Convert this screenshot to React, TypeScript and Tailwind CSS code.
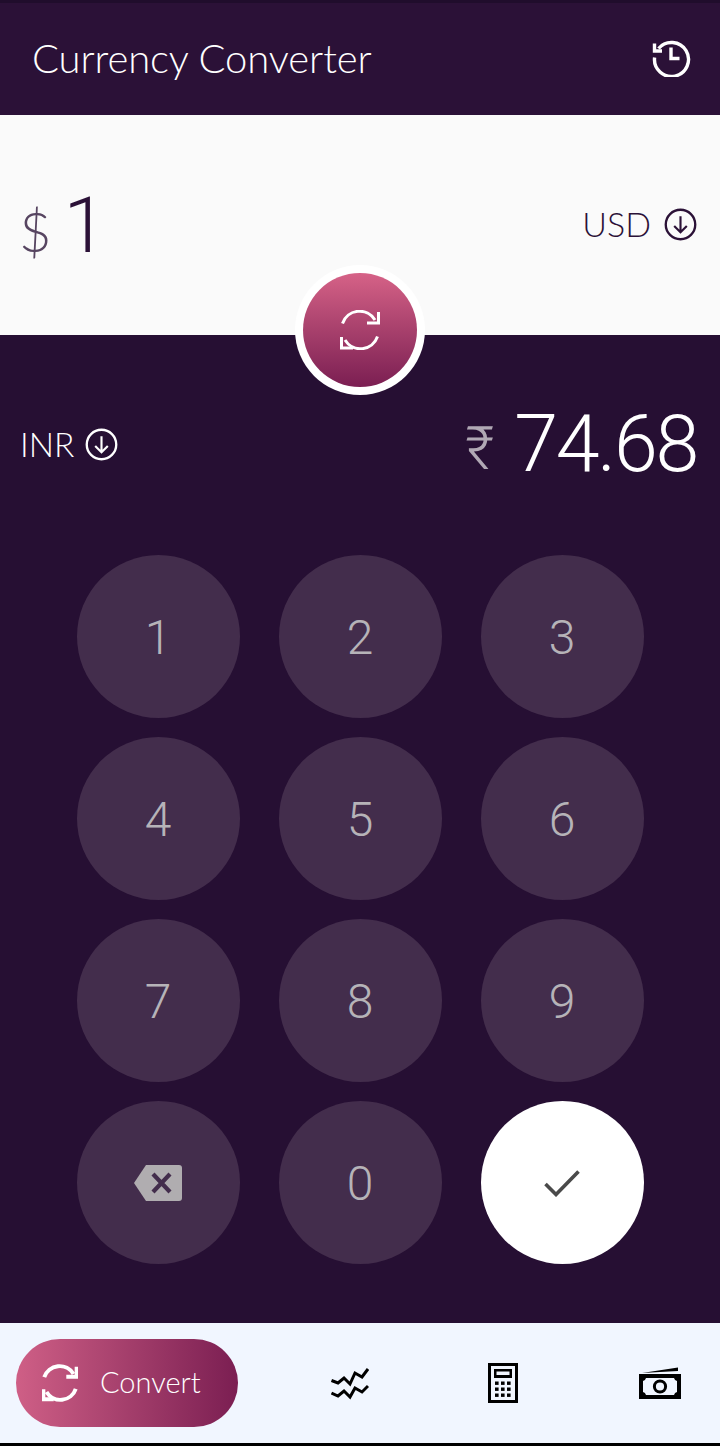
const font = { fontFamily: '"Lato", "Noto Sans", sans-serif' };
const digits = { fontFamily: '"Roboto", "Noto Sans", sans-serif' };

function DownCircle({ className }: { className: string }) {
  return (
    <svg viewBox="0 0 34 34" className={className} fill="none" stroke="currentColor" strokeWidth="2.4">
      <circle cx="17" cy="17" r="15.2" />
      <path d="M17 8.5V25M10.5 18.5 17 25l6.5-6.5" strokeWidth="2.2" />
    </svg>
  );
}

function Sync({ className, width }: { className: string; width: number }) {
  return (
    <svg viewBox="0 0 40 40" className={className} fill="none" stroke="currentColor" strokeWidth={width}>
      <path d="M2.5 13.5A18 18 0 0 1 35 10" />
      <path d="M38.5 2V13H27" />
      <path d="M37.5 26.5A18 18 0 0 1 5 30" />
      <path d="M1.5 27V38H13" />
    </svg>
  );
}

function Key({ label }: { label: string }) {
  return (
    <div style={digits} className="w-[163px] h-[163px] rounded-full bg-[#432d4c] flex items-center justify-center pt-[2px] text-[48px] font-light leading-none text-[#b6b3b8]">
      {label}
    </div>
  );
}

export default function App() {
  return (
    <div style={font} className="w-[720px] h-[1446px] flex flex-col bg-black overflow-hidden relative">
      <div className="h-[3px] bg-[#200d2c]" />
      <header className="h-[112px] bg-[#2b1137] flex items-center justify-between pl-[32px] pr-[29px] text-white">
        <h1 className="text-[40px] font-light leading-none tracking-[-0.1px] -mt-[2px]">Currency Converter</h1>
        <svg viewBox="0 0 40 40" className="w-[40px] h-[40px] -mt-[4px]" fill="none" stroke="white" strokeWidth="3.4">
          <path d="M7.5 11.5A17 17 0 1 1 3.6 20.5" />
          <path d="M3.5 6.5V14H11" strokeWidth="3.4" />
          <path d="M20 10.5V21.5H28.5" />
        </svg>
      </header>

      <section className="h-[220px] bg-[#fafafa] flex items-start justify-between pl-[19px] pr-[23px] pt-[70px] text-[#2b1137]">
        <div className="flex items-start">
          <span className="text-[56px] font-light leading-none mt-[18px] text-[#574561]">$</span>
          <span style={digits} className="text-[78px] font-light leading-none ml-[12px] mt-[2px]">1</span>
        </div>
        <div className="flex items-center gap-[13px] mt-[19px]">
          <span className="text-[34px] font-light leading-[40px]">USD</span>
          <DownCircle className="w-[33px] h-[33px]" />
        </div>
      </section>

      <section className="flex-1 bg-[#260f33] flex flex-col">
        <div className="flex items-center justify-between pl-[20px] pr-[23px] h-[220px] text-white">
          <div className="flex items-center gap-[11px] -mt-[2px]">
            <span className="text-[33.5px] font-light leading-[40px]">INR</span>
            <DownCircle className="w-[33px] h-[33px]" />
          </div>
          <div className="flex items-center -mt-[2px]">
            <span style={digits} className="text-[60px] font-light leading-none mt-[10px] mr-[20px] text-[#b0a8b4]">₹</span>
            <span style={digits} className="text-[79px] font-light leading-none tracking-[-2.3px]">74.68</span>
          </div>
        </div>

        <div className="grid grid-cols-[163px_163px_163px] gap-x-[39px] gap-y-[19px] pl-[76.5px]">
          {["1", "2", "3", "4", "5", "6", "7", "8", "9"].map((k) => (
            <Key key={k} label={k} />
          ))}
          <div className="w-[163px] h-[163px] rounded-full bg-[#432d4c] flex items-center justify-center">
            <svg viewBox="0 0 48 36" className="w-[48px] h-[36px]">
              <path d="M12 0H45a3 3 0 0 1 3 3V33a3 3 0 0 1-3 3H12L0 18Z" fill="#b0adb0" />
              <path d="M19 9 36 27M36 9 19 27" stroke="#432d4c" strokeWidth="4.2" fill="none" />
            </svg>
          </div>
          <Key label="0" />
          <div className="w-[163px] h-[163px] rounded-full bg-white flex items-center justify-center">
            <svg viewBox="0 0 36 28" className="w-[36px] h-[28px]" fill="none" stroke="#4a4a4a" strokeWidth="3.6">
              <path d="M1.5 15 12 25.5 34.5 2.5" />
            </svg>
          </div>
        </div>
      </section>

      <nav className="h-[120px] bg-[#f1f6ff] flex items-center pl-[16px] text-black">
        <div className="w-[222px] h-[88px] rounded-full bg-gradient-to-r from-[#cf5f86] to-[#7b1e52] flex items-center pl-[26px] text-white">
          <Sync className="w-[36px] h-[38px]" width={4.4} />
          <span className="text-[29px] font-light leading-none ml-[22px] -mt-[3px]">Convert</span>
        </div>
        <svg viewBox="0 0 38 34" className="w-[38px] h-[34px] ml-[93px]" fill="none" stroke="black" strokeWidth="3">
          <path d="M0.5 14.5 7 17l6-5 6 6 5-11 7 4 6-8" />
          <path d="M0.5 27 7 30l6-5 6 6 5-9 7 4 6-6" />
        </svg>
        <svg viewBox="0 0 30 40" className="w-[30px] h-[40px] ml-[119px]">
          <path fillRule="evenodd" d="M0 0H30V40H0ZM3 3V37H27V3Z" fill="black" />
          <path fillRule="evenodd" d="M6 6H24V15H6ZM8.5 8.5V12H21.5V8.5Z" fill="black" />
          {[18.5, 24.5, 30.5].flatMap((y) =>
            [7, 13, 19].map((x) => <rect key={`${x}-${y}`} x={x} y={y} width="3.6" height="3.4" fill="black" />)
          )}
        </svg>
        <svg viewBox="0 0 44 32" className="w-[44px] h-[32px] ml-[121px]">
          <path d="M3 6 39 0.5V4L3 6Z" fill="black" />
          <path fillRule="evenodd" d="M0 7H42V32H0ZM7 11a4 4 0 0 1-3 3V25a4 4 0 0 1 3 3H35a4 4 0 0 1 3-3V14a4 4 0 0 1-3-3Z" fill="black" />
          <circle cx="21" cy="19.5" r="5.6" fill="none" stroke="black" strokeWidth="3" />
        </svg>
      </nav>
      <div className="h-[3px] bg-black" />

      <div className="absolute left-[295px] top-[265px] w-[130px] h-[130px] rounded-full bg-white flex items-center justify-center">
        <div className="w-[114px] h-[114px] rounded-full bg-gradient-to-b from-[#d66287] to-[#7b1e52] flex items-center justify-center text-white">
          <Sync className="w-[40px] h-[40px]" width={3} />
        </div>
      </div>
    </div>
  );
}
